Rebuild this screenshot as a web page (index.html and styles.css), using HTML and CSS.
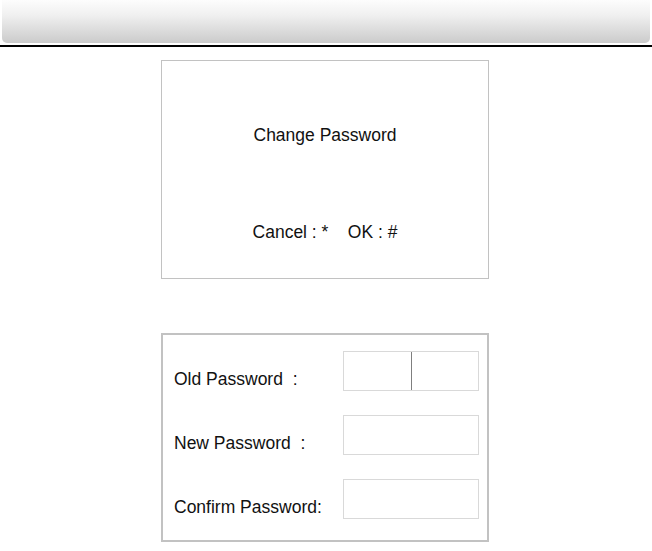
FILE: index.html
```html
<!DOCTYPE html>
<html>
<head>
    <title>Change Password</title>
    <link rel="stylesheet" href="styles.css">
</head>
<body>
    <div class="header"></div>
    <div class="rule"></div>

    <div class="screen prompt">
        <p class="prompt-title">Change Password</p>
        <p class="prompt-keys">Cancel : *    OK : #</p>
    </div>

    <div class="screen form">
        <div class="row">
            <span class="label">Old Password  :</span>
            <div class="field split">
                <span class="cell cell-first"></span>
                <span class="cell"></span>
            </div>
        </div>
        <div class="row">
            <span class="label">New Password  :</span>
            <div class="field"></div>
        </div>
        <div class="row">
            <span class="label">Confirm Password:</span>
            <div class="field"></div>
        </div>
    </div>
</body>
</html>
```

FILE: styles.css
```css
body {
    font-family: "Liberation Sans", Arial, sans-serif;
    margin: 0;
    background: white;
    color: #111;
}
.header {
    height: 43px;
    margin: 0 2px;
    background: linear-gradient(to bottom, #fdfdfd, #f0f0f0 35%, #cbcbcb);
    border-radius: 0 0 5px 5px;
}
.rule {
    height: 2px;
    margin-top: 2px;
    background: black;
}
.screen {
    box-sizing: border-box;
    width: 328px;
    margin-left: 161px;
    border: 1px solid #c2c2c2;
}
.prompt {
    height: 219px;
    margin-top: 13px;
    padding-top: 64px;
    text-align: center;
    font-size: 17.5px;
}
.prompt p {
    margin: 0;
    line-height: 20px;
    white-space: pre;
}
.prompt-keys {
    margin-top: 77px !important;
}
.form {
    margin-top: 54px;
    height: 209px;
    padding: 16px 0 0 11px;
    border-width: 2px;
    display: flex;
    flex-direction: column;
    gap: 24px;
}
.row {
    display: grid;
    grid-template-columns: 169px 136px;
    align-items: end;
}
.label {
    font-size: 17.5px;
    line-height: 20px;
    margin-bottom: 2px;
    white-space: pre;
}
.field {
    box-sizing: border-box;
    height: 40px;
    border: 1px solid #d9d9d9;
}
.split {
    display: flex;
}
.cell {
    flex: 1;
}
.cell-first {
    border-right: 1px solid #7f7f7f;
}
```
